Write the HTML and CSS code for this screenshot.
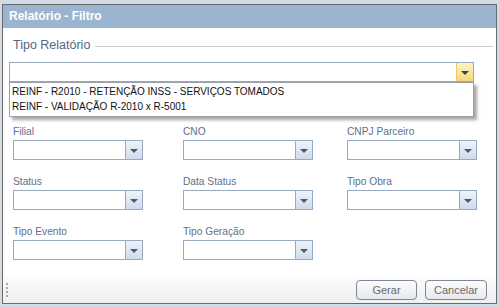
FILE: index.html
```html
<!DOCTYPE html>
<html lang="pt-BR">
<head>
    <meta charset="UTF-8">
    <title>Relatório - Filtro</title>
    <link rel="stylesheet" href="styles.css">
</head>
<body>
    <div class="window">
        <div class="window-title">Relatório - Filtro</div>

        <div class="window-body">
            <div class="group">
                <div class="group-legend"><span>Tipo Relatório</span></div>
                <div class="combo combo-wide combo-focus">
                    <div class="combo-input"></div>
                    <div class="combo-trigger"><span class="arrow"></span></div>
                    <ul class="combo-list">
                        <li>REINF - R2010 - RETENÇÃO INSS - SERVIÇOS TOMADOS</li>
                        <li>REINF - VALIDAÇÃO R-2010 x R-5001</li>
                    </ul>
                </div>
            </div>

            <div class="filters">
                <div class="field">
                    <label>Filial</label>
                    <div class="combo"><div class="combo-input"></div><div class="combo-trigger"><span class="arrow"></span></div></div>
                </div>
                <div class="field">
                    <label>CNO</label>
                    <div class="combo"><div class="combo-input"></div><div class="combo-trigger"><span class="arrow"></span></div></div>
                </div>
                <div class="field">
                    <label>CNPJ Parceiro</label>
                    <div class="combo"><div class="combo-input"></div><div class="combo-trigger"><span class="arrow"></span></div></div>
                </div>
                <div class="field">
                    <label>Status</label>
                    <div class="combo"><div class="combo-input"></div><div class="combo-trigger"><span class="arrow"></span></div></div>
                </div>
                <div class="field">
                    <label>Data Status</label>
                    <div class="combo"><div class="combo-input"></div><div class="combo-trigger"><span class="arrow"></span></div></div>
                </div>
                <div class="field">
                    <label>Tipo Obra</label>
                    <div class="combo"><div class="combo-input"></div><div class="combo-trigger"><span class="arrow"></span></div></div>
                </div>
                <div class="field">
                    <label>Tipo Evento</label>
                    <div class="combo"><div class="combo-input"></div><div class="combo-trigger"><span class="arrow"></span></div></div>
                </div>
                <div class="field">
                    <label>Tipo Geração</label>
                    <div class="combo"><div class="combo-input"></div><div class="combo-trigger"><span class="arrow"></span></div></div>
                </div>
            </div>
        </div>

        <div class="window-footer">
            <span class="grip"></span>
            <div class="buttons">
                <button class="btn btn-gerar">Gerar</button>
                <button class="btn btn-cancelar">Cancelar</button>
            </div>
        </div>
    </div>
</body>
</html>
```

FILE: styles.css
```css
body {
    margin: 0;
    padding: 4px 0 0 2px;
    background-color: #d3dbe5;
    font-family: "Liberation Sans", Arial, sans-serif;
    height: 307px;
    box-sizing: border-box;
    overflow: hidden;
}

.window {
    width: 495px;
    height: 300px;
    box-sizing: border-box;
    border: 1px solid #6a6a6a;
    background-color: #fff;
    display: flex;
    flex-direction: column;
}

.window-title {
    height: 23px;
    line-height: 23px;
    padding: 0 6px;
    background-color: #9bb5d1;
    color: #fff;
    font-weight: bold;
    font-size: 12px;
}

.window-body {
    flex: 1;
    padding: 0 0 0 6px;
}

.group-legend {
    display: flex;
    align-items: center;
    height: 14px;
    margin: 10px 0 0 4px;
    color: #56657e;
    font-size: 12.5px;
}

.group-legend::after {
    content: "";
    flex: 1;
    height: 1px;
    margin: 3px 3px 0 5px;
    background-color: #c9ced6;
}

.combo {
    position: relative;
    display: flex;
    width: 130px;
    height: 20px;
    box-sizing: border-box;
    border: 1px solid #98a9c2;
}

.combo-wide {
    width: 465px;
    margin-top: 10px;
}

.combo-input {
    flex: 1;
    background-color: #fff;
}

.combo-trigger {
    width: 16px;
    border-left: 1px solid #98a9c2;
    background: linear-gradient(#edf3fa, #cfdcec);
    display: flex;
    align-items: center;
    justify-content: center;
}

.combo-focus .combo-trigger {
    border-left-color: #e9c86a;
    background: linear-gradient(#fdf4c6, #f7d97a);
}

.arrow {
    width: 0;
    height: 0;
    border-left: 4px solid transparent;
    border-right: 4px solid transparent;
    border-top: 4px solid #4b5a70;
    margin-top: 1px;
}

.combo-focus .arrow {
    border-top-color: #2f4470;
}

.combo-list {
    position: absolute;
    top: 19px;
    left: -1px;
    width: 465px;
    box-sizing: border-box;
    margin: 0;
    padding: 1px 0 2px;
    list-style: none;
    background-color: #fff;
    border: 1px solid #98a0ab;
    box-shadow: 3px 3px 3px rgba(0, 0, 0, 0.35);
    z-index: 2;
}

.combo-list li {
    height: 15px;
    line-height: 15px;
    padding-left: 2px;
    font-size: 10px;
    color: #111;
}

.filters {
    display: grid;
    grid-template-columns: 170px 164px 130px;
    row-gap: 14px;
    margin: 42px 0 0 4px;
}

.field label {
    display: block;
    height: 16px;
    line-height: 16px;
    color: #5f6f86;
    font-size: 10.2px;
}

.window-footer {
    height: 26px;
    display: flex;
    align-items: center;
    justify-content: space-between;
    padding: 0 9px 0 3px;
    background: linear-gradient(#fbfbfb, #efefef);
}

.grip {
    width: 2px;
    height: 14px;
    background: repeating-linear-gradient(#a8a8a8 0 2px, transparent 2px 4px);
}

.buttons {
    display: flex;
    gap: 8px;
}

.btn {
    height: 20px;
    padding: 0;
    font-family: "Liberation Sans", Arial, sans-serif;
    font-size: 11px;
    color: #6a6a6a;
    border: 1px solid #7c8898;
    border-radius: 4px;
    background: linear-gradient(#fdfdfd, #e4e8ee);
}

.btn-gerar {
    width: 61px;
}

.btn-cancelar {
    width: 62px;
}
```
